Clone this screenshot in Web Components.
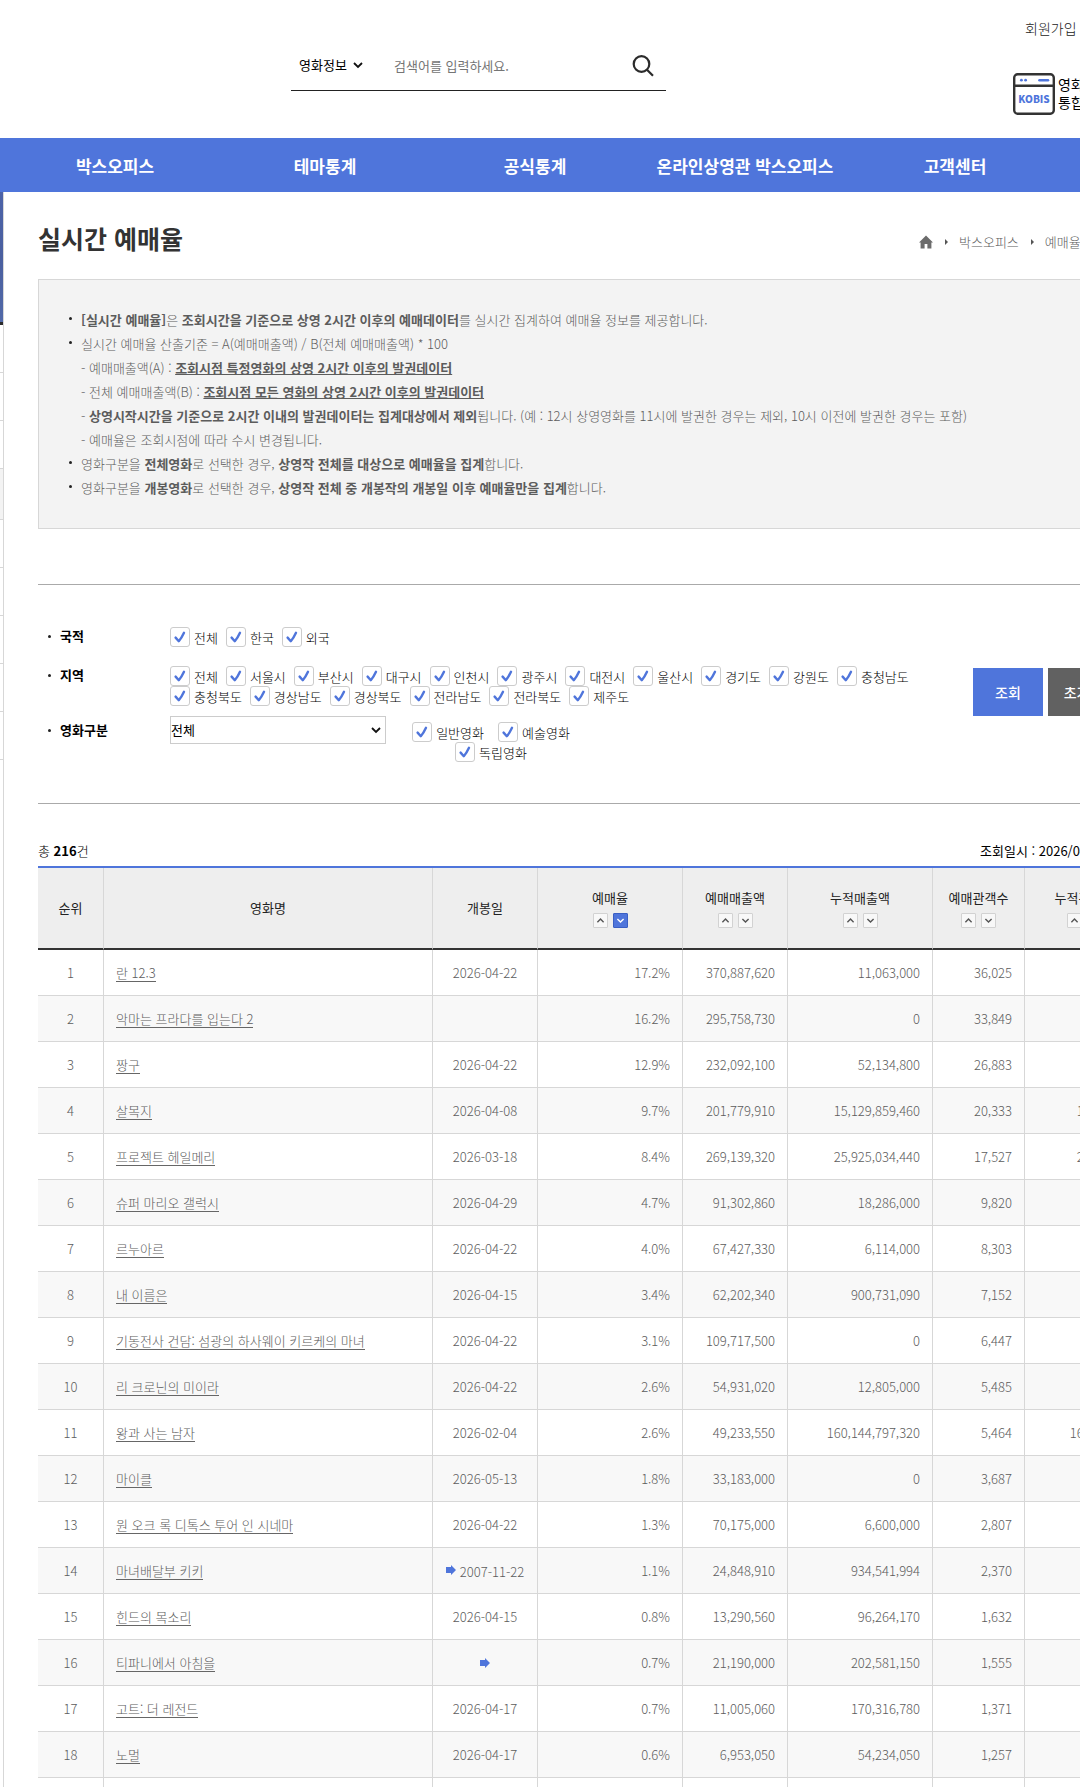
<!DOCTYPE html>
<html lang="ko">
<head>
<meta charset="utf-8">
<meta name="viewport" content="width=device-width, initial-scale=1">
<title>실시간 예매율</title>
<style>
  html, body { margin: 0; }
  body {
    --blue: #4f75db;
    --line: #d7d7d7;
    font: 300 13px/20px "Noto Sans CJK KR", "Noto Sans", sans-serif;
    color: #5c5c5c;
    background: #fff;
  }
</style>
</head>
<body>
<kobis-app></kobis-app>

<script>
const BASE = `
  *, *::before, *::after { box-sizing: border-box; }
  a { color: inherit; text-decoration: none; }
  ul, ol { margin: 0; padding: 0; list-style: none; }
  button, input, select { font: inherit; margin: 0; }
  select {
    appearance: none; padding: 0; border-radius: 0; color: #000; font-weight: 400;
    background: #fff url("data:image/svg+xml,%3Csvg xmlns='http://www.w3.org/2000/svg' width='10' height='7' fill='none' stroke='%23111' stroke-width='1.8'%3E%3Cpath d='M1 1l4 4 4-4'/%3E%3C/svg%3E") no-repeat right 4px center;
  }
`;

function define(name, css, html) {
  customElements.define(name, class extends HTMLElement {
    connectedCallback() {
      if (this.shadowRoot) return;
      const root = this.attachShadow({ mode: 'open' });
      root.innerHTML = `<style>${BASE}${css}</style>${typeof html === 'function' ? html(this) : html}`;
    }
  });
}

// ---------- header ----------

define('search-box', `
  :host { display: block; }
  form { display: flex; align-items: center; height: 51px; width: 375px; border-bottom: 1px solid #222; }
  select { width: 66px; margin-left: 8px; border: 0; background-position: right 2px center; }
  input { flex: 1; min-width: 0; margin-left: 29px; padding: 2px 0 0; border: 0; background: none; color: #222; outline: none; }
  input::placeholder { color: #757575; font-weight: 400; }
  button { width: 24px; height: 24px; margin-right: 11px; padding: 0; border: 0; background: none; cursor: pointer; }
  svg { display: block; }
`, `
  <form role="search">
    <select aria-label="검색 구분"><option>영화정보</option></select>
    <input type="text" placeholder="검색어를 입력하세요." aria-label="검색어">
    <button type="button" aria-label="검색">
      <svg width="24" height="24" viewBox="0 0 24 24" fill="none" stroke="#2b2b2b" stroke-width="2.2">
        <circle cx="10.5" cy="11" r="7.8"/><path d="M16 16.8 22 22.8"/>
      </svg>
    </button>
  </form>
`);

define('site-header', `
  :host { display: flex; justify-content: space-between; height: 138px; padding: 0 0 0 291px; }
  search-box { padding-top: 40px; }
  .side { width: 67px; flex: none; padding-top: 18px; white-space: nowrap; font-size: 14px; color: #222; }
  .join { display: block; padding-left: 12px; }
  .kobis { display: flex; gap: 3px; margin-top: 35px; color: #000; font-weight: 400; line-height: 18px; }
  .kobis svg { flex: none; }
  .kobis span { padding-top: 2px; }
`, `
  <search-box></search-box>
  <div class="side">
    <a class="join" href="#join">회원가입</a>
    <a class="kobis" href="#kobis">
      <svg width="42" height="42" viewBox="0 0 42 42" aria-hidden="true">
        <rect x="1.2" y="1.2" width="39.6" height="39.6" rx="3.5" fill="#fff" stroke="#333" stroke-width="2.4"/>
        <path d="M1 12.8h40" stroke="#333" stroke-width="2.4"/>
        <circle cx="8.4" cy="7.2" r="1.4" fill="#4f75db"/>
        <circle cx="12.6" cy="7.2" r="1.4" fill="#4f75db"/>
        <path d="M26.5 7.2h8.5" stroke="#4f75db" stroke-width="2.6" stroke-linecap="round"/>
        <text x="21" y="29.5" text-anchor="middle" font-family="Noto Sans CJK KR, sans-serif" font-weight="900" font-size="10" fill="#4f75db">KOBIS</text>
      </svg>
      <span>영화관<br>통합</span>
    </a>
  </div>
`);

define('main-nav', `
  :host { display: block; background: var(--blue); }
  ul { display: grid; grid-template-columns: repeat(5, 210px); padding: 1px 0 0 10px; }
  a { display: block; text-align: center; white-space: nowrap; color: #fff; font-size: 17px; font-weight: 700; line-height: 53px; }
`, `
  <nav aria-label="주 메뉴"><ul>
    ${['박스오피스', '테마통계', '공식통계', '온라인상영관 박스오피스', '고객센터'].map(t => `<li><a href="#">${t}</a></li>`).join('')}
  </ul></nav>
`);

// Only the right edge of the side menu is on screen.
define('side-menu', `
  :host { display: block; flex: none; width: 4px; border-right: 1px solid var(--line); }
  .banner { height: 133px; background: linear-gradient(#4c63a8, #4a5f9f 50%, #5169a8); border-bottom: 3px solid #2b2b2b; }
  li { height: 48px; border-bottom: 1px solid var(--line); }
  li.on { height: 51px; background: #f3f3f3; }
`, `
  <div class="banner"></div>
  <ul>${[0, 0, 0, 1, 0, 0, 0, 0, 0].map(on => `<li${on ? ' class="on"' : ''}></li>`).join('')}</ul>
`);

// ---------- content ----------

define('crumb-trail', `
  :host { display: block; }
  ol { display: flex; align-items: center; }
  li { display: flex; align-items: center; }
  li + li::before { content: ""; margin: 0 11px 0 12px; border: solid transparent; border-width: 3px 0 3px 3px; border-left-color: #555; }
  svg { display: block; }
`, `
  <nav aria-label="현재 위치"><ol>
    <li><a href="#home" aria-label="홈"><svg width="14" height="14" viewBox="0 0 14 14"><path d="M7 .5 0 7.4h1.6V13.5h4V9h2.8v4.5h4V7.4H14z" fill="#6c6c6c"/></svg></a></li>
    <li><a href="#box">박스오피스</a></li>
    <li><a href="#rate">예매율</a></li>
  </ol></nav>
`);

define('notice-box', `
  :host { display: block; padding: 28px 30px 28px 31px; border: 1px solid var(--line); background: #f3f3f3; line-height: 24px; }
  ::slotted(p) { margin: 0; padding-left: 11px; }
`, `<slot></slot>`);

define('check-item', `
  :host { display: inline-block; }
  label { display: flex; gap: 4px; color: #000; white-space: nowrap; cursor: pointer; }
  .box { display: grid; flex: none; }
  .box > * { grid-area: 1 / 1; }
  input { appearance: none; width: 20px; height: 20px; border: 1px solid #ccc; border-radius: 3px; background: #fff; }
  svg { pointer-events: none; }
  input:not(:checked) + svg { visibility: hidden; }
  .text { padding-top: 1px; height: 20px; }
`, `
  <label>
    <span class="box">
      <input type="checkbox" checked>
      <svg width="20" height="20" viewBox="0 0 20 20" fill="none" stroke="#4f75db" stroke-width="2.4" stroke-linecap="round" stroke-linejoin="round"><path d="M5.6 10.6 8.8 14.2Q11.4 11.4 14 5.8"/></svg>
    </span>
    <span class="text"><slot></slot></span>
  </label>
`);

const checks = names => names.split(' ').map(n => `<check-item>${n}</check-item>`).join('');

define('filter-panel', `
  :host { display: block; border: solid #aaa; border-width: 1px 0; }
  form { display: flex; align-items: center; gap: 0 5px; padding: 42px 27px 41px 10px; }
  .fields { flex: 1; min-width: 0; }
  .row { display: grid; grid-template-columns: 122px 1fr; }
  .row.region { margin: 19px 0 10px; }
  .name { display: flex; align-items: center; height: 18px; gap: 9px; color: #000; font-weight: 700; }
  .name::before { content: ""; width: 3px; height: 3px; border-radius: 2px; background: #222; }
  .checks { display: flex; flex-wrap: wrap; gap: 0 8px; }
  .kind { display: flex; gap: 10px; }
  .kind .checks { width: 190px; justify-content: center; gap: 0 14px; padding-top: 6px; }
  .row.type .name { margin-top: 5px; }
  select { width: 216px; height: 28px; border: 1px solid #ccc; }
  button { width: 70px; height: 48px; margin-bottom: 5px; padding: 0; border: 0; background: var(--blue); color: #fff; font-size: 14px; font-weight: 500; cursor: pointer; }
  button.reset { background: #616161; }
`, `
  <form>
    <div class="fields">
      <div class="row"><span class="name">국적</span><div class="checks">${checks('전체 한국 외국')}</div></div>
      <div class="row region"><span class="name">지역</span><div class="checks">${checks('전체 서울시 부산시 대구시 인천시 광주시 대전시 울산시 경기도 강원도 충청남도 충청북도 경상남도 경상북도 전라남도 전라북도 제주도')}</div></div>
      <div class="row type">
        <label class="name" for="type">영화구분</label>
        <div class="kind">
          <select id="type"><option>전체</option></select>
          <div class="checks">${checks('일반영화 예술영화 독립영화')}</div>
        </div>
      </div>
    </div>
    <button type="button">조회</button>
    <button type="button" class="reset">초기화</button>
  </form>
`);

define('sort-pair', `
  :host { display: flex; justify-content: center; gap: 5px; }
  button { width: 15px; height: 15px; padding: 0; border: 1px solid #d2d2d2; border-radius: 1px; background: #f8f8f8; color: #555; cursor: pointer; }
  button.on { border-color: #3a5fc4; background: var(--blue); color: #fff; }
  svg { display: block; fill: none; stroke: currentColor; stroke-width: 1.4; }
`, el => `
  <button type="button" aria-label="오름차순"><svg width="13" height="13" viewBox="0 0 13 13"><path d="M3.4 8.2l3.1-3.1 3.1 3.1"/></svg></button>
  <button type="button" aria-label="내림차순"${el.hasAttribute('desc') ? ' class="on"' : ''}><svg width="13" height="13" viewBox="0 0 13 13"><path d="M3.4 5l3.1 3.1L9.6 5"/></svg></button>
`);

// title, release date ("*" marks a re-release), rate, sales, total sales, audience, total audience
const MOVIES = [
  ['란 12.3', '2026-04-22', '17.2%', '370,887,620', '11,063,000', '36,025'],
  ['악마는 프라다를 입는다 2', '', '16.2%', '295,758,730', '0', '33,849'],
  ['짱구', '2026-04-22', '12.9%', '232,092,100', '52,134,800', '26,883'],
  ['살목지', '2026-04-08', '9.7%', '201,779,910', '15,129,859,460', '20,333', '1,500,000'],
  ['프로젝트 헤일메리', '2026-03-18', '8.4%', '269,139,320', '25,925,034,440', '17,527', '2,300,000'],
  ['슈퍼 마리오 갤럭시', '2026-04-29', '4.7%', '91,302,860', '18,286,000', '9,820'],
  ['르누아르', '2026-04-22', '4.0%', '67,427,330', '6,114,000', '8,303'],
  ['내 이름은', '2026-04-15', '3.4%', '62,202,340', '900,731,090', '7,152'],
  ['기동전사 건담: 섬광의 하사웨이 키르케의 마녀', '2026-04-22', '3.1%', '109,717,500', '0', '6,447'],
  ['리 크로닌의 미이라', '2026-04-22', '2.6%', '54,931,020', '12,805,000', '5,485'],
  ['왕과 사는 남자', '2026-02-04', '2.6%', '49,233,550', '160,144,797,320', '5,464', '16,000,000'],
  ['마이클', '2026-05-13', '1.8%', '33,183,000', '0', '3,687'],
  ['원 오크 록 디톡스 투어 인 시네마', '2026-04-22', '1.3%', '70,175,000', '6,600,000', '2,807'],
  ['마녀배달부 키키', '*2007-11-22', '1.1%', '24,848,910', '934,541,994', '2,370'],
  ['힌드의 목소리', '2026-04-15', '0.8%', '13,290,560', '96,264,170', '1,632'],
  ['티파니에서 아침을', '*', '0.7%', '21,190,000', '202,581,150', '1,555'],
  ['고트: 더 레전드', '2026-04-17', '0.7%', '11,005,060', '170,316,780', '1,371'],
  ['노멀', '2026-04-17', '0.6%', '6,953,050', '54,234,050', '1,257'],
  ['', '', '', '', '', ''],
];

const AGAIN = `<svg width="10" height="10" viewBox="0 0 10 10" role="img" aria-label="재개봉"><path d="M0 2h5V0l5 5-5 5V8H0z" fill="#4f75db"/></svg>`;

define('rank-table', `
  :host { display: block; }
  table { width: 100%; table-layout: fixed; border-collapse: separate; border-spacing: 0; border-top: 2px solid var(--blue); }
  th, td { padding: 0 12px; border-right: 1px solid var(--line); white-space: nowrap; }
  th { height: 82px; background: #eee; border-bottom: 2px solid #333; color: #222; font-weight: 400; }
  th sort-pair { margin-top: 5px; }
  td { height: 46px; border-bottom: 1px solid var(--line); text-align: right; }
  td.mid { text-align: center; padding: 0; }
  td.name { text-align: left; }
  td.name a { border-bottom: 1px solid #666; display: inline-block; line-height: 16px; }
  tr:nth-child(even) td { background: #f8f8f8; }
  .date { display: inline-flex; gap: 4px; align-items: center; }
  .date svg { margin-bottom: 4px; }
`, `
  <table>
    <colgroup>
      <col style="width:66px"><col><col style="width:105px"><col style="width:145px"><col style="width:105px"><col style="width:145px"><col style="width:92px"><col style="width:120px">
    </colgroup>
    <thead><tr>
      ${['순위', '영화명', '개봉일'].map(t => `<th scope="col">${t}</th>`).join('')}
      ${['예매율', '예매매출액', '누적매출액', '예매관객수', '누적관객수'].map((t, i) => `<th scope="col">${t}<sort-pair${i ? '' : ' desc'}></sort-pair></th>`).join('')}
    </tr></thead>
    <tbody>
      ${MOVIES.map(([title, date, ...nums], i) => `<tr>
        <td class="mid">${title && i + 1}</td>
        <td class="name">${title && `<a href="#">${title}</a>`}</td>
        <td class="mid"><span class="date">${date.replace('*', AGAIN)}</span></td>
        ${[0, 1, 2, 3, 4].map(n => `<td>${nums[n] || ''}</td>`).join('')}
      </tr>`).join('')}
    </tbody>
  </table>
`);

define('kobis-app', `
  :host { display: block; height: 100vh; overflow: hidden; }
  .body { display: flex; }
  main { flex: 1 0 auto; width: calc(100% + 27px); min-width: 1107px; margin-left: 34px; }
  .head { display: flex; justify-content: space-between; align-items: center; height: 87px; padding: 5px 0 0; }
  .head crumb-trail { width: 226px; padding-top: 7px; }
  h1 { margin: 0; color: #333; font-size: 25px; line-height: 36px; font-weight: 700; }
  b { font-weight: 700; }
  .dot::before { content: ""; float: left; width: 3px; height: 3px; margin: 9px 0 0 -12px; border-radius: 2px; background: #222; }
  filter-panel { margin-top: 55px; }
  .count { display: flex; justify-content: space-between; height: 62px; padding-top: 37px; color: #000; }
  .count span { width: 165px; font-weight: 400; white-space: nowrap; }
`, `
  <site-header></site-header>
  <main-nav></main-nav>
  <div class="body">
    <side-menu></side-menu>
    <main>
      <div class="head"><h1>실시간 예매율</h1><crumb-trail></crumb-trail></div>
      <notice-box>
        <p class="dot"><b>[실시간 예매율]</b>은 <b>조회시간을 기준으로 상영 2시간 이후의 예매데이터</b>를 실시간 집계하여 예매율 정보를 제공합니다.</p>
        <p class="dot">실시간 예매율 산출기준 = A(예매매출액) / B(전체 예매매출액) * 100</p>
        <p>- 예매매출액(A) : <b><u>조회시점 특정영화의 상영 2시간 이후의 발권데이터</u></b></p>
        <p>- 전체 예매매출액(B) : <b><u>조회시점 모든 영화의 상영 2시간 이후의 발권데이터</u></b></p>
        <p>- <b>상영시작시간을 기준으로 2시간 이내의 발권데이터는 집계대상에서 제외</b>됩니다. (예 : 12시 상영영화를 11시에 발권한 경우는 제외, 10시 이전에 발권한 경우는 포함)</p>
        <p>- 예매율은 조회시점에 따라 수시 변경됩니다.</p>
        <p class="dot">영화구분을 <b>전체영화</b>로 선택한 경우, <b>상영작 전체를 대상으로 예매율을 집계</b>합니다.</p>
        <p class="dot">영화구분을 <b>개봉영화</b>로 선택한 경우, <b>상영작 전체 중 개봉작의 개봉일 이후 예매율만을 집계</b>합니다.</p>
      </notice-box>
      <filter-panel></filter-panel>
      <div class="count"><div>총 <b>216</b>건</div><span>조회일시 : 2026/04/22</span></div>
      <rank-table></rank-table>
    </main>
  </div>
`);
</script>
</body>
</html>
